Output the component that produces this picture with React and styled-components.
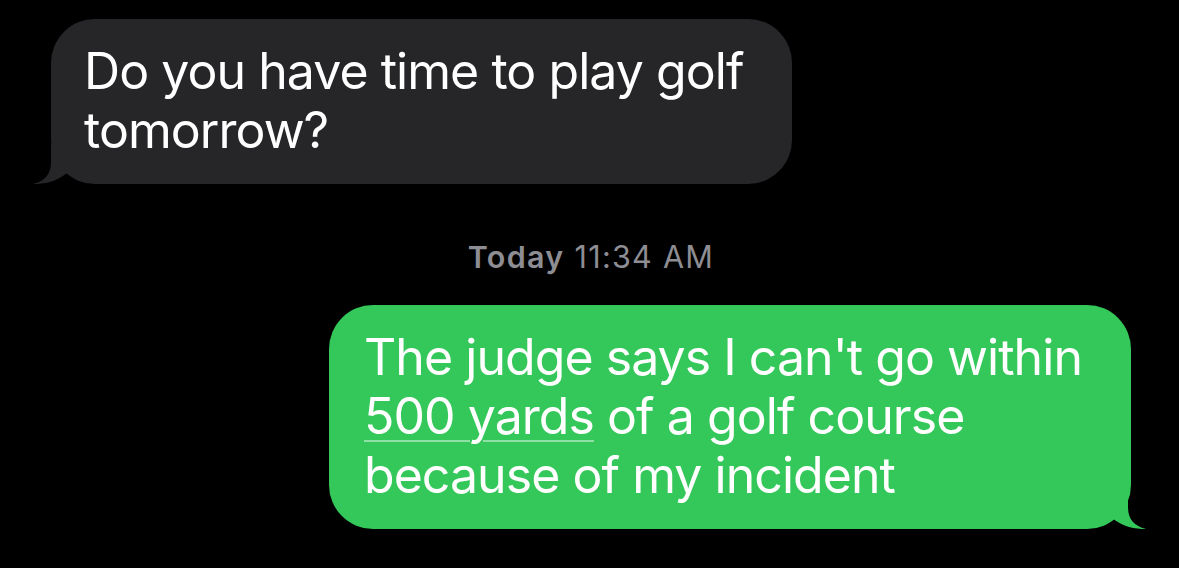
import React from 'react';
import styled, { createGlobalStyle } from 'styled-components';

const GlobalStyle = createGlobalStyle`
  html, body {
    margin: 0;
    padding: 0;
    background: #000;
  }
  body {
    font-family: Inter, "Noto Sans", sans-serif;
    -webkit-font-smoothing: antialiased;
  }
`;

const Thread = styled.div`
  width: 1179px;
  height: 568px;
  box-sizing: border-box;
  padding: 19px 48px 0 51px;
  display: flex;
  flex-direction: column;
  background: #000;
  overflow: hidden;
`;

const Bubble = styled.div`
  position: relative;
  align-self: ${(p) => (p.$sent ? 'flex-end' : 'flex-start')};
  width: fit-content;
  box-sizing: border-box;
  padding: 23px 49px 24px ${(p) => (p.$sent ? '35px' : '33px')};
  border-radius: 44px;
  background: ${(p) => (p.$sent ? '#34c759' : '#262629')};
  color: #fff;
  font-size: 50px;
  line-height: 59px;
  letter-spacing: -0.95px;
  white-space: nowrap;
`;

const Tail = styled.svg`
  position: absolute;
  bottom: 0;
  width: 40px;
  height: 40px;
  ${(p) => (p.$sent ? 'right: -16px; transform: scaleX(-1);' : 'left: -19px;')}
`;

const Stamp = styled.div`
  margin: 55px 0 30px;
  text-align: center;
  color: #8d8d93;
  font-size: 30.5px;
  line-height: 36px;
  letter-spacing: 1.3px;
  b {
    font-weight: 600;
  }
`;

const Link = styled.span`
  text-decoration: underline;
  text-decoration-color: rgba(255, 255, 255, 0.45);
  text-decoration-thickness: 2px;
  text-underline-offset: 6px;
`;

function BubbleTail({ sent, color }) {
  return (
    <Tail $sent={sent} viewBox="0 0 40 40">
      <path
        d="M19 0 L19 18 C19 30 13 37 1 40 C12 40 24 38 35 29 L35 0 Z"
        fill={color}
      />
    </Tail>
  );
}

export default function App() {
  return (
    <>
      <GlobalStyle />
      <Thread>
        <Bubble>
          Do you have time to play golf
          <br />
          tomorrow?
          <BubbleTail color="#262629" />
        </Bubble>

        <Stamp>
          <b>Today</b> 11:34 AM
        </Stamp>

        <Bubble $sent>
          The judge says I can't go within
          <br />
          <Link>500 yards</Link> of a golf course
          <br />
          because of my incident
          <BubbleTail sent color="#34c759" />
        </Bubble>
      </Thread>
    </>
  );
}
